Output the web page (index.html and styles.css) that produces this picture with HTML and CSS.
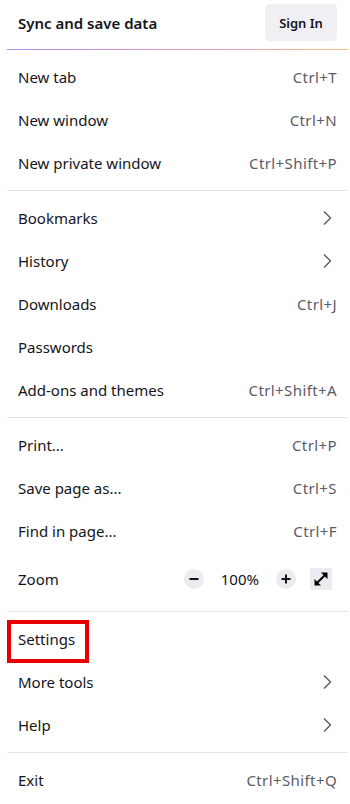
FILE: index.html
```html
<!DOCTYPE html>
<html>
<head>
<meta charset="UTF-8">
<link rel="stylesheet" href="styles.css">
<title>Menu</title>
</head>
<body>
  <div class="menu">
    <div class="sync">
      <span class="sync-title">Sync and save data</span>
      <button class="sign-in">Sign In</button>
    </div>
    <div class="sync-line"></div>

    <div class="group">
      <div class="row"><span>New tab</span><span class="key">Ctrl+T</span></div>
      <div class="row"><span>New window</span><span class="key">Ctrl+N</span></div>
      <div class="row"><span>New private window</span><span class="key">Ctrl+Shift+P</span></div>
    </div>
    <div class="sep"></div>

    <div class="group">
      <div class="row"><span>Bookmarks</span><svg class="chev" viewBox="0 0 10 16"><path d="M2 1.5 L8.5 8 L2 14.5"/></svg></div>
      <div class="row"><span>History</span><svg class="chev" viewBox="0 0 10 16"><path d="M2 1.5 L8.5 8 L2 14.5"/></svg></div>
      <div class="row"><span>Downloads</span><span class="key">Ctrl+J</span></div>
      <div class="row"><span>Passwords</span></div>
      <div class="row"><span>Add-ons and themes</span><span class="key">Ctrl+Shift+A</span></div>
    </div>
    <div class="sep"></div>

    <div class="group">
      <div class="row"><span>Print...</span><span class="key">Ctrl+P</span></div>
      <div class="row"><span>Save page as...</span><span class="key">Ctrl+S</span></div>
      <div class="row"><span>Find in page...</span><span class="key">Ctrl+F</span></div>
      <div class="row zoom-row">
        <span>Zoom</span>
        <div class="zoom-ctrl">
          <span class="round-btn"><svg viewBox="0 0 20 20"><path d="M5.5 10 H14.5"/></svg></span>
          <span class="zoom-val">100%</span>
          <span class="round-btn"><svg viewBox="0 0 20 20"><path d="M5.5 10 H14.5 M10 5.5 V14.5"/></svg></span>
          <span class="full-btn"><svg viewBox="0 0 22 22"><path class="arrow-line" d="M7 15 L15 7"/><path class="arrow-head" d="M17.5 4.5 L17.5 11 L11 4.5 Z M4.5 17.5 L4.5 11 L11 17.5 Z"/></svg></span>
        </div>
      </div>
    </div>
    <div class="sep"></div>

    <div class="group">
      <div class="row settings"><span>Settings</span><div class="mark"></div></div>
      <div class="row"><span>More tools</span><svg class="chev" viewBox="0 0 10 16"><path d="M2 1.5 L8.5 8 L2 14.5"/></svg></div>
      <div class="row"><span>Help</span><svg class="chev" viewBox="0 0 10 16"><path d="M2 1.5 L8.5 8 L2 14.5"/></svg></div>
    </div>
    <div class="sep"></div>

    <div class="group">
      <div class="row"><span>Exit</span><span class="key">Ctrl+Shift+Q</span></div>
    </div>
  </div>
</body>
</html>
```
FILE: styles.css
```css
body {
  margin: 0;
  background-color: #fff;
  font-family: 'Noto Sans', 'Open Sans', sans-serif;
  font-size: 15px;
  color: #15141a;
}
.menu {
  margin: 0 2px 0 7px;
}
.sync {
  display: flex;
  justify-content: space-between;
  align-items: center;
  padding: 4px 11px 0;
  margin-bottom: 8px;
}
.sync-title {
  font-weight: 600;
}
.sign-in {
  width: 72px;
  height: 37px;
  border: none;
  border-radius: 5px;
  background-color: #f0f0f4;
  color: #15141a;
  font-family: 'Noto Sans', 'Open Sans', sans-serif;
  font-size: 13px;
  font-weight: 600;
  padding: 0;
}
.sync-line {
  height: 1px;
  background: linear-gradient(90deg, #a98cf2, #e994c8 50%, #f7c18c);
}
.group {
  padding: 5px 0 6px;
}
.sep {
  height: 1px;
  background-color: #e3e3e8;
}
.row {
  display: flex;
  justify-content: space-between;
  align-items: center;
  height: 43px;
  padding: 0 11px;
}
.key {
  color: #5b5b66;
  letter-spacing: 0.4px;
}
.chev {
  width: 10px;
  height: 16px;
  margin-right: 5px;
  fill: none;
  stroke: #5b5b66;
  stroke-width: 1.4;
}
.zoom-row {
  height: 53px;
}
.zoom-ctrl {
  display: flex;
  align-items: center;
}
.round-btn {
  display: flex;
  width: 20px;
  height: 20px;
  border-radius: 50%;
  background-color: #ececf0;
}
.round-btn svg {
  width: 20px;
  height: 20px;
  fill: none;
  stroke: #15141a;
  stroke-width: 2;
}
.zoom-val {
  padding: 0 17px;
  color: #15141a;
}
.full-btn {
  display: flex;
  width: 22px;
  height: 22px;
  margin-left: 14px;
  margin-right: 5px;
  background-color: #ececf0;
}
.full-btn svg {
  width: 22px;
  height: 22px;
}
.arrow-line {
  fill: none;
  stroke: #000;
  stroke-width: 2;
}
.arrow-head {
  fill: #000;
}
.settings {
  position: relative;
}
.mark {
  position: absolute;
  left: 0;
  top: 3px;
  width: 82px;
  height: 43px;
  box-sizing: border-box;
  border: 4px solid #e80000;
}
```
